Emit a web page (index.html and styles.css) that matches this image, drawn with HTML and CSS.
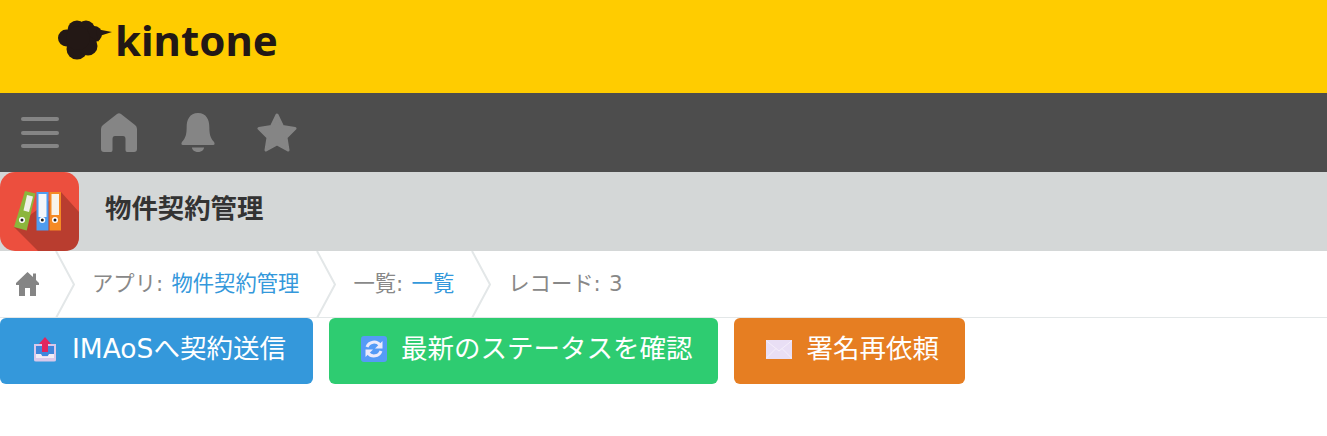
FILE: index.html
```html
<!DOCTYPE html>
<html lang="ja">
  <head>
    <meta charset="utf-8">
    <title>物件契約管理</title>
    <link rel="stylesheet" href="styles.css">
  </head>
  <body>
    <header class="top-bar">
      <div class="logo">
        <svg class="logo-cloud" width="54" height="40" viewBox="0 0 54 40">
          <g fill="#231815">
            <circle cx="8.500" cy="18" r="8.500"/>
            <circle cx="19" cy="10" r="9.500"/>
            <circle cx="28" cy="9.500" r="9"/>
            <circle cx="36" cy="14" r="8"/>
            <circle cx="19" cy="29" r="10.500"/>
            <circle cx="30" cy="26" r="9.500"/>
            <circle cx="20" cy="18" r="12"/>
            <path d="M38 9 L54 12 L43 15.500 L40 22 Z"/>
          </g>
        </svg>
        <span class="logo-text">kintone</span>
      </div>
    </header>

    <nav class="nav-bar">
      <svg class="nav-icon menu-icon" width="38" height="34" viewBox="0 0 38 34">
        <g stroke="#858585" stroke-width="4" stroke-linecap="round">
          <line x1="2" y1="3" x2="36" y2="3"/>
          <line x1="2" y1="17" x2="36" y2="17"/>
          <line x1="2" y1="30" x2="36" y2="30"/>
        </g>
      </svg>
      <svg class="nav-icon" width="36" height="39" viewBox="0 0 36 39">
        <path fill="#858585" d="M16 1 Q18 -0.5 20 1 L34 12 Q36 13.5 36 16 V36 Q36 39 33 39 H26 Q24.500 39 24.500 37 V26 Q24.500 23 22 23 H14 Q11.500 23 11.500 26 V37 Q11.500 39 10 39 H3 Q0 39 0 36 V16 Q0 13.500 2 12 Z"/>
      </svg>
      <svg class="nav-icon bell-icon" width="34" height="39" viewBox="0 0 36 39" preserveAspectRatio="none">
        <path fill="#858585" d="M18 0 C27 0 30 7 30 14 C30 21 31 25 35 29 Q36.500 32 34 32 H2 Q-0.500 32 1 29 C5 25 6 21 6 14 C6 7 9 0 18 0 Z"/>
        <path fill="#858585" d="M11.500 34.500 H24.500 C24 37.500 21 39 18 39 C15 39 12 37.500 11.500 34.500 Z"/>
      </svg>
      <svg class="nav-icon" width="40" height="39" viewBox="0 0 40 39">
        <path fill="#858585" stroke="#858585" stroke-width="3" stroke-linejoin="round" d="M20 2 L25.500 13.500 L38 15.500 L29 24.500 L31 37 L20 31 L9 37 L11 24.500 L2 15.500 L14.500 13.500 Z"/>
      </svg>
    </nav>

    <div class="app-bar">
      <svg class="app-icon" width="79" height="79" viewBox="0 0 79 79">
        <rect width="79" height="79" rx="15" fill="#ec4f3e"/>
        <path fill="#b93d2f" d="M14 55 L38 79 H64 Q79 79 79 64 V40 L61 20 Z"/>
        <path fill="#8cb63c" d="M25 19 L35.500 21.500 L26.700 58.500 L14 55 Z"/>
        <path fill="#f0f0e8" d="M27 23 L33 24.500 L29 40 L23.500 38.500 Z"/>
        <rect x="36.500" y="20" width="12" height="38.500" fill="#4f9cf0"/>
        <rect x="38.500" y="22" width="8" height="23" fill="#f4f6fa"/>
        <rect x="49.500" y="20" width="11.500" height="38.500" fill="#f58a24"/>
        <rect x="51.500" y="22" width="7.500" height="21" fill="#f7f3ea"/>
        <g fill="#fff">
          <circle cx="22" cy="48" r="3"/>
          <circle cx="42.300" cy="48" r="3"/>
          <circle cx="55" cy="48" r="3"/>
        </g>
        <g fill="#222">
          <circle cx="22" cy="48" r="1.500"/>
          <circle cx="42.300" cy="48" r="1.500"/>
          <circle cx="55" cy="48" r="1.500"/>
        </g>
      </svg>
      <h1 class="app-title">物件契約管理</h1>
    </div>

    <div class="breadcrumb">
      <svg class="crumb-home" width="23" height="24" viewBox="0 0 23 24">
        <path fill="#858585" d="M11.500 0 L17 5 V1.500 H20 V8 L23 11 V13 H20 V24 H14 V16 H9 V24 H3 V13 H0 V11 Z"/>
      </svg>
      <svg class="crumb-sep" width="20" height="67" viewBox="0 0 20 67">
        <path d="M1 0 L19 33.500 L1 67" fill="none" stroke="#e3e7e8" stroke-width="2"/>
      </svg>
      <span class="crumb">アプリ: <a class="crumb-link" href="#">物件契約管理</a></span>
      <svg class="crumb-sep" width="20" height="67" viewBox="0 0 20 67">
        <path d="M1 0 L19 33.500 L1 67" fill="none" stroke="#e3e7e8" stroke-width="2"/>
      </svg>
      <span class="crumb">一覧: <a class="crumb-link" href="#">一覧</a></span>
      <svg class="crumb-sep" width="20" height="67" viewBox="0 0 20 67">
        <path d="M1 0 L19 33.500 L1 67" fill="none" stroke="#e3e7e8" stroke-width="2"/>
      </svg>
      <span class="crumb">レコード: 3</span>
    </div>

    <div class="actions">
      <button class="action-btn btn-blue">
        <svg class="btn-icon" width="26" height="26" viewBox="0 0 26 26">
          <path fill="#d9c8ea" d="M2 8 H24 V24 Q24 25.500 22 25.500 H4 Q2 25.500 2 24 Z"/>
          <rect x="4" y="10" width="18" height="10" fill="#3f86dc"/>
          <path fill="#f0ecf6" d="M4 18 H9 L10.500 20.500 H15.500 L17 18 H22 V22 H4 Z"/>
          <path fill="#e0265e" d="M13 1 L19 8 H16 V16 H10 V8 H7 Z"/>
        </svg>
        <span class="btn-label">IMAoSへ契約送信</span>
      </button>
      <button class="action-btn btn-green">
        <svg class="btn-icon" width="26" height="26" viewBox="0 0 26 26">
          <rect width="26" height="26" rx="3" fill="#559bf6"/>
          <path fill="none" stroke="#ecebfb" stroke-width="3" d="M6 11 A7.500 7.500 0 0 1 19 9"/>
          <path fill="#ecebfb" d="M21.500 5 V12.500 H14 Z"/>
          <path fill="none" stroke="#ecebfb" stroke-width="3" d="M20 15 A7.500 7.500 0 0 1 7 17"/>
          <path fill="#ecebfb" d="M4.500 21 V13.500 H12 Z"/>
        </svg>
        <span class="btn-label">最新のステータスを確認</span>
      </button>
      <button class="action-btn btn-orange">
        <svg class="btn-icon" width="26" height="26" viewBox="0 0 26 26">
          <rect x="0" y="4" width="26" height="19" fill="#e9dff5"/>
          <path fill="none" stroke="#f5eefa" stroke-width="1" d="M0 4.500 L13 15 L26 4.500 M0 22.500 L10 12.500 M26 22.500 L16 12.500"/>
        </svg>
        <span class="btn-label">署名再依頼</span>
      </button>
    </div>
  </body>
</html>
```

FILE: styles.css
```css
body {
  margin: 0;
  background-color: #fff;
  font-family: "DejaVu Sans", "Noto Sans CJK JP", sans-serif;
}

.top-bar {
  height: 93px;
  background-color: #ffcc00;
  padding-left: 58px;
  box-sizing: border-box;
}

.logo {
  display: flex;
  align-items: flex-start;
  gap: 3px;
  padding-top: 20px;
}

.logo-text {
  font-family: "Noto Sans", sans-serif;
  font-weight: 700;
  font-size: 42px;
  line-height: 40px;
  color: #231815;
}

.nav-bar {
  display: flex;
  align-items: center;
  height: 79px;
  background-color: #4d4d4d;
  padding-left: 21px;
  gap: 42px;
}

.bell-icon {
  margin-left: 2px;
}

.app-bar {
  display: flex;
  align-items: center;
  height: 79px;
  background-color: #d4d7d7;
}

.app-title {
  margin: 0 0 4px 26px;
  font-size: 26.4px;
  line-height: 1;
  font-weight: 700;
  color: #333;
}

.breadcrumb {
  display: flex;
  align-items: center;
  gap: 17px;
  height: 67px;
  padding-left: 16px;
  border-bottom: 1px solid #e3e7e8;
  box-sizing: border-box;
  font-size: 21.33px;
  color: #888;
}

.crumb-home {
  margin-right: -1px;
}

.crumb {
  line-height: 1;
  word-spacing: 1.5px;
}

.crumb-link {
  color: #3498db;
  text-decoration: none;
}

.actions {
  display: flex;
  gap: 16px;
}

.action-btn {
  display: flex;
  align-items: center;
  gap: 14px;
  height: 66px;
  padding: 0 26px 4px 32px;
  border: none;
  border-radius: 6px;
  color: #fff;
  font-family: inherit;
  font-size: 26.5px;
  cursor: pointer;
}

.btn-label {
  line-height: 1;
}

.btn-blue {
  background-color: #3498db;
  padding-right: 27px;
}

.btn-green {
  background-color: #2ecc71;
}

.btn-orange {
  background-color: #e67e22;
}
```
